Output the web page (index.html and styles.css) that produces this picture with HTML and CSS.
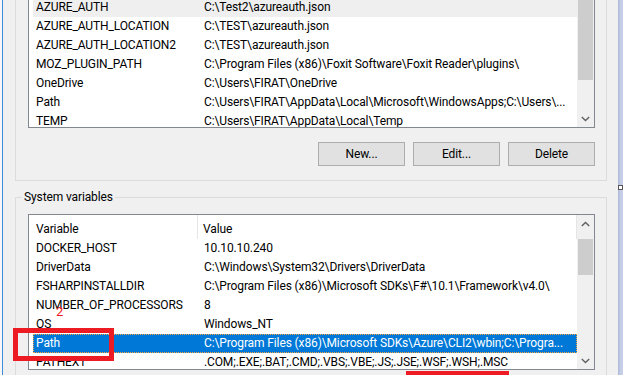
FILE: index.html
```html
<!DOCTYPE html>
<html>
<head>
<meta charset="utf-8">
<link rel="stylesheet" href="styles.css">
</head>
<body>
<div class="screen">
  <div class="edge-left"><div class="edge-line"></div></div>
  <div class="dialog">
    <div class="group group-user">
      <div class="listbox listbox-user">
        <div class="list-main list-main-user">
          <div class="row row-hover"><span class="c1">AZURE_AUTH</span><span class="c2">C:\Test2\azureauth.json</span></div>
          <div class="row"><span class="c1">AZURE_AUTH_LOCATION</span><span class="c2">C:\TEST\azureauth.json</span></div>
          <div class="row"><span class="c1">AZURE_AUTH_LOCATION2</span><span class="c2">C:\TEST\azureauth.json</span></div>
          <div class="row"><span class="c1">MOZ_PLUGIN_PATH</span><span class="c2">C:\Program Files (x86)\Foxit Software\Foxit Reader\plugins\</span></div>
          <div class="row"><span class="c1">OneDrive</span><span class="c2">C:\Users\FIRAT\OneDrive</span></div>
          <div class="row"><span class="c1">Path</span><span class="c2">C:\Users\FIRAT\AppData\Local\Microsoft\WindowsApps;C:\Users\...</span></div>
          <div class="row"><span class="c1">TEMP</span><span class="c2">C:\Users\FIRAT\AppData\Local\Temp</span></div>
        </div>
        <div class="scrollbar scrollbar-user">
          <div class="thumb thumb-user"></div>
          <div class="track"></div>
          <div class="arrow"><svg width="9" height="6" viewBox="0 0 9 6"><polyline points="0.8,1 4.5,4.6 8.2,1" fill="none" stroke="#606060" stroke-width="1.4"/></svg></div>
        </div>
      </div>
      <div class="buttons">
        <div class="btn">New...</div>
        <div class="btn">Edit...</div>
        <div class="btn">Delete</div>
      </div>
    </div>

    <div class="group group-system">
      <div class="group-title">System variables</div>
      <div class="listbox listbox-system">
        <div class="list-main list-main-system">
          <div class="header">
            <div class="h1">Variable</div>
            <div class="h2">Value</div>
          </div>
          <div class="row"><span class="c1">DOCKER_HOST</span><span class="c2">10.10.10.240</span></div>
          <div class="row"><span class="c1">DriverData</span><span class="c2">C:\Windows\System32\Drivers\DriverData</span></div>
          <div class="row"><span class="c1">FSHARPINSTALLDIR</span><span class="c2">C:\Program Files (x86)\Microsoft SDKs\F#\10.1\Framework\v4.0\</span></div>
          <div class="row"><span class="c1">NUMBER_OF_PROCESSORS</span><span class="c2">8</span></div>
          <div class="row"><span class="c1">OS</span><span class="c2">Windows_NT</span></div>
          <div class="row row-selected"><span class="c1">Path</span><span class="c2">C:\Program Files (x86)\Microsoft SDKs\Azure\CLI2\wbin;C:\Progra...</span></div>
          <div class="row"><span class="c1">PATHEXT</span><span class="c2">.COM;.EXE;.BAT;.CMD;.VBS;.VBE;.JS;.JSE;.WSF;.WSH;.MSC</span></div>
        </div>
        <div class="scrollbar scrollbar-system">
          <div class="arrow"><svg width="9" height="6" viewBox="0 0 9 6"><polyline points="0.8,5 4.5,1.4 8.2,5" fill="none" stroke="#606060" stroke-width="1.4"/></svg></div>
          <div class="track track-top"></div>
          <div class="thumb thumb-system"></div>
          <div class="track"></div>
          <div class="arrow"><svg width="9" height="6" viewBox="0 0 9 6"><polyline points="0.8,1 4.5,4.6 8.2,1" fill="none" stroke="#606060" stroke-width="1.4"/></svg></div>
        </div>
      </div>
    </div>
  </div>
  <div class="edge-right"></div>

  <div class="mark-rect"></div>
  <div class="mark-num">2</div>
  <div class="mark-bar"></div>
  <div class="grip"></div>
</div>
</body>
</html>
```
FILE: styles.css
```css
* { box-sizing: border-box; }
html, body { margin: 0; padding: 0; }
body {
  background: #f0f0f0;
  font-family: Roboto, "Noto Sans", sans-serif;
  font-size: 12px;
  letter-spacing: -0.12px;
  color: #000;
}
.screen {
  position: relative;
  width: 623px;
  height: 375px;
  overflow: hidden;
  display: flex;
  background: #f0f0f0;
}
.edge-left {
  width: 3px;
  flex: none;
  background: #f7f7f7;
  display: flex;
  justify-content: flex-end;
}
.edge-line { width: 1px; background: #3f8ddf; }
.dialog { width: 615px; flex: none; }
.edge-right {
  width: 5px;
  flex: none;
  background: linear-gradient(to right, #a9b5d8, #c3cbe6 40%, #c9d0e9);
}

.group {
  margin-left: 12px;
  width: 592px;
  border: 1px solid #dcdcdc;
  padding: 0 11px 0 12px;
}
.group-user {
  margin-top: -2px;
  border-top: none;
  padding-bottom: 14px;
}
.group-system {
  margin-top: 16px;
  border-bottom: none;
  height: 200px;
}
.group-title {
  width: fit-content;
  margin-top: -9px;
  margin-left: -6px;
  padding: 0 2px;
  height: 16px;
  line-height: 16px;
  background: #f0f0f0;
}

.listbox {
  border: 1px solid #828790;
  background: #fff;
  display: flex;
}
.listbox-user { border-top: none; height: 130px; }
.listbox-system { margin-top: 9px; height: 156px; }
.list-main { flex: 1; overflow: hidden; }

.row {
  margin-left: 4px;
  height: 19px;
  line-height: 19px;
  padding-left: 3px;
  display: flex;
  white-space: nowrap;
}
.c1 { width: 168px; flex: none; }
.c2 { flex: 1; }
.row-hover { background: #efefef; }
.row-selected {
  background: #0078d7;
  color: #fff;
  outline: 1px dotted #f3a443;
  outline-offset: -1px;
}

.header {
  height: 24px;
  display: flex;
  line-height: 20px;
  padding-top: 4px;
}
.h1 {
  width: 169px;
  padding-left: 7px;
  border-right: 1px solid #e5e5e5;
  margin-top: -4px;
  padding-top: 4px;
}
.h2 {
  flex: 1;
  padding-left: 5px;
  border-right: 1px solid #e5e5e5;
  margin-top: -4px;
  padding-top: 4px;
}

.scrollbar {
  width: 17px;
  flex: none;
  background: #f0f0f0;
  display: flex;
  flex-direction: column;
}
.arrow {
  height: 17px;
  flex: none;
  display: flex;
  align-items: center;
  justify-content: center;
}
.track { flex: 1; }
.track-top { flex: none; height: 7px; }
.thumb { flex: none; margin: 0 1px; background: #cdcdcd; }
.thumb-user { height: 82px; }
.thumb-system { height: 36px; }

.buttons {
  margin-top: 14px;
  display: flex;
  justify-content: flex-end;
  gap: 8px;
}
.btn {
  width: 87px;
  height: 24px;
  border: 1px solid #adadad;
  background: #e1e1e1;
  text-align: center;
  line-height: 22px;
}

.mark-rect {
  position: absolute;
  left: 13px;
  top: 328px;
  width: 101px;
  height: 33px;
  border: 5px solid #ed1c24;
}
.mark-num {
  position: absolute;
  left: 56px;
  top: 305px;
  font-size: 13px;
  line-height: 13px;
  color: #ed1c24;
}
.mark-bar {
  position: absolute;
  left: 406px;
  top: 371px;
  width: 103px;
  height: 5px;
  background: #ed1c24;
}
.grip {
  position: absolute;
  left: 618px;
  top: 185px;
  width: 5px;
  height: 5px;
  background: #fff;
  border: 1px solid #555;
}
```
